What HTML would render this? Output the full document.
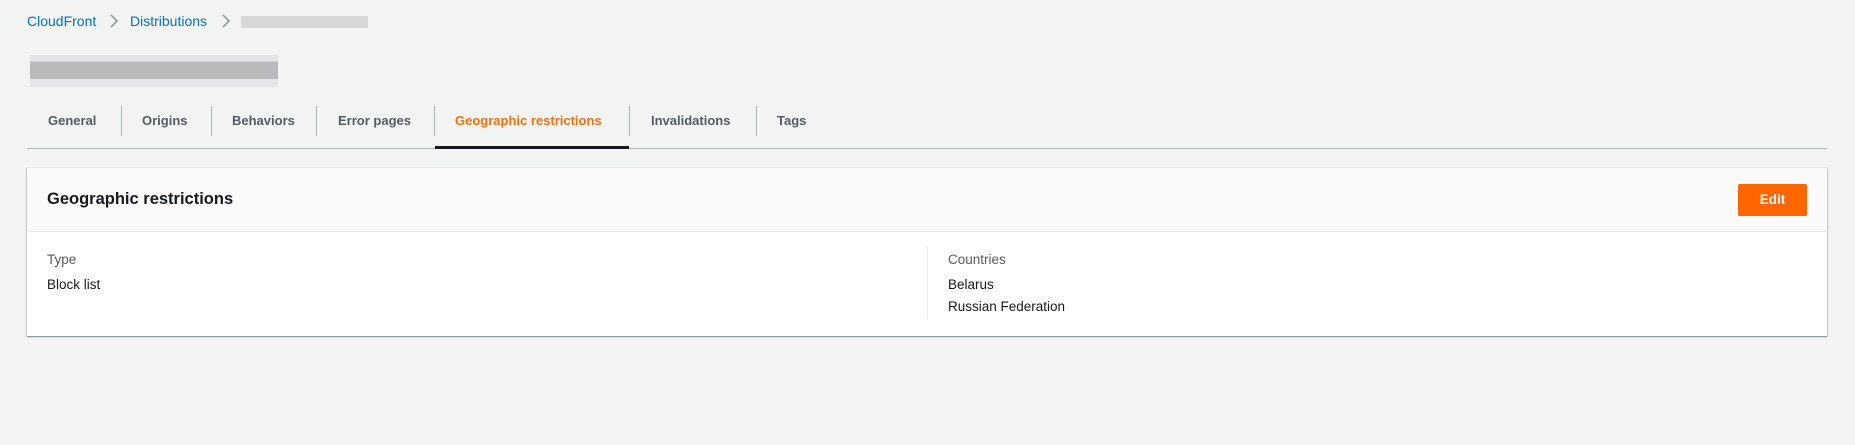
<!DOCTYPE html>
<html><head><meta charset="utf-8"><style>
*{margin:0;padding:0;box-sizing:border-box}
body{width:1855px;height:445px;background:#f2f3f3;font-family:"Liberation Sans",sans-serif;position:relative;overflow:hidden;color:#16191f}
.a{position:absolute;white-space:nowrap}
.bc{top:13px;font-size:14px;color:#0073bb}
.chev{top:13px;width:10px;height:16px}
.tab{top:113px;font-size:13px;font-weight:bold;color:#545b64}
.sep{top:106px;width:1px;height:30px;background:#aab7b8}
.lbl{font-size:13.5px;color:#545b64}
.val{font-size:13.5px;color:#16191f}
</style></head><body>
<div class="a bc" style="left:27px">CloudFront</div>
<svg class="a chev" style="left:109px" viewBox="0 0 10 16"><path d="M2 2l6 6-6 6" fill="none" stroke="#879596" stroke-width="1.5"/></svg>
<div class="a bc" style="left:130px">Distributions</div>
<svg class="a chev" style="left:221px" viewBox="0 0 10 16"><path d="M2 2l6 6-6 6" fill="none" stroke="#879596" stroke-width="1.5"/></svg>
<div class="a" style="left:241px;top:16px;width:127px;height:12px;background:#d5d7d8"></div>
<div class="a" style="left:30px;top:55px;width:248px;height:32px;background:linear-gradient(#e4e5e6 0 20%,#b8babc 20% 75%,#e4e5e6 75%)"></div>

<div class="a tab" style="left:48px">General</div>
<div class="a sep" style="left:121px"></div>
<div class="a tab" style="left:142px">Origins</div>
<div class="a sep" style="left:211px"></div>
<div class="a tab" style="left:232px">Behaviors</div>
<div class="a sep" style="left:316px"></div>
<div class="a tab" style="left:338px">Error pages</div>
<div class="a sep" style="left:434px"></div>
<div class="a tab" style="left:455px;color:#ec7211">Geographic restrictions</div>
<div class="a sep" style="left:629px"></div>
<div class="a tab" style="left:651px">Invalidations</div>
<div class="a sep" style="left:756px"></div>
<div class="a tab" style="left:777px">Tags</div>
<div class="a" style="left:27px;top:148px;width:1800px;height:1px;background:#aab7b8"></div>
<div class="a" style="left:435px;top:146px;width:194px;height:3px;background:#16191f"></div>

<div class="a" style="left:27px;top:167px;width:1800px;height:169px;background:#fff;border-top:1px solid #eaeded;box-shadow:0 1px 1px 0 rgba(0,28,36,.3),1px 1px 1px 0 rgba(0,28,36,.15),-1px 1px 1px 0 rgba(0,28,36,.15)">
 <div style="height:64px;background:#fafafa;border-bottom:1px solid #eaeded;position:relative">
  <div class="a" style="left:20px;top:22px;font-size:16.5px;font-weight:bold">Geographic restrictions</div>
  <div class="a" style="left:1711px;top:16px;width:69px;height:32px;background:#ff6600;border-radius:2px;color:#fff;font-weight:bold;font-size:13.5px;text-align:center;line-height:32px">Edit</div>
 </div>
 <div class="a lbl" style="left:20px;top:84px">Type</div>
 <div class="a val" style="left:20px;top:109px">Block list</div>
 <div class="a" style="left:900px;top:79px;width:1px;height:71px;background:#eaeded"></div>
 <div class="a lbl" style="left:921px;top:84px">Countries</div>
 <div class="a val" style="left:921px;top:109px">Belarus</div>
 <div class="a val" style="left:921px;top:131px">Russian Federation</div>
</div>
</body></html>
